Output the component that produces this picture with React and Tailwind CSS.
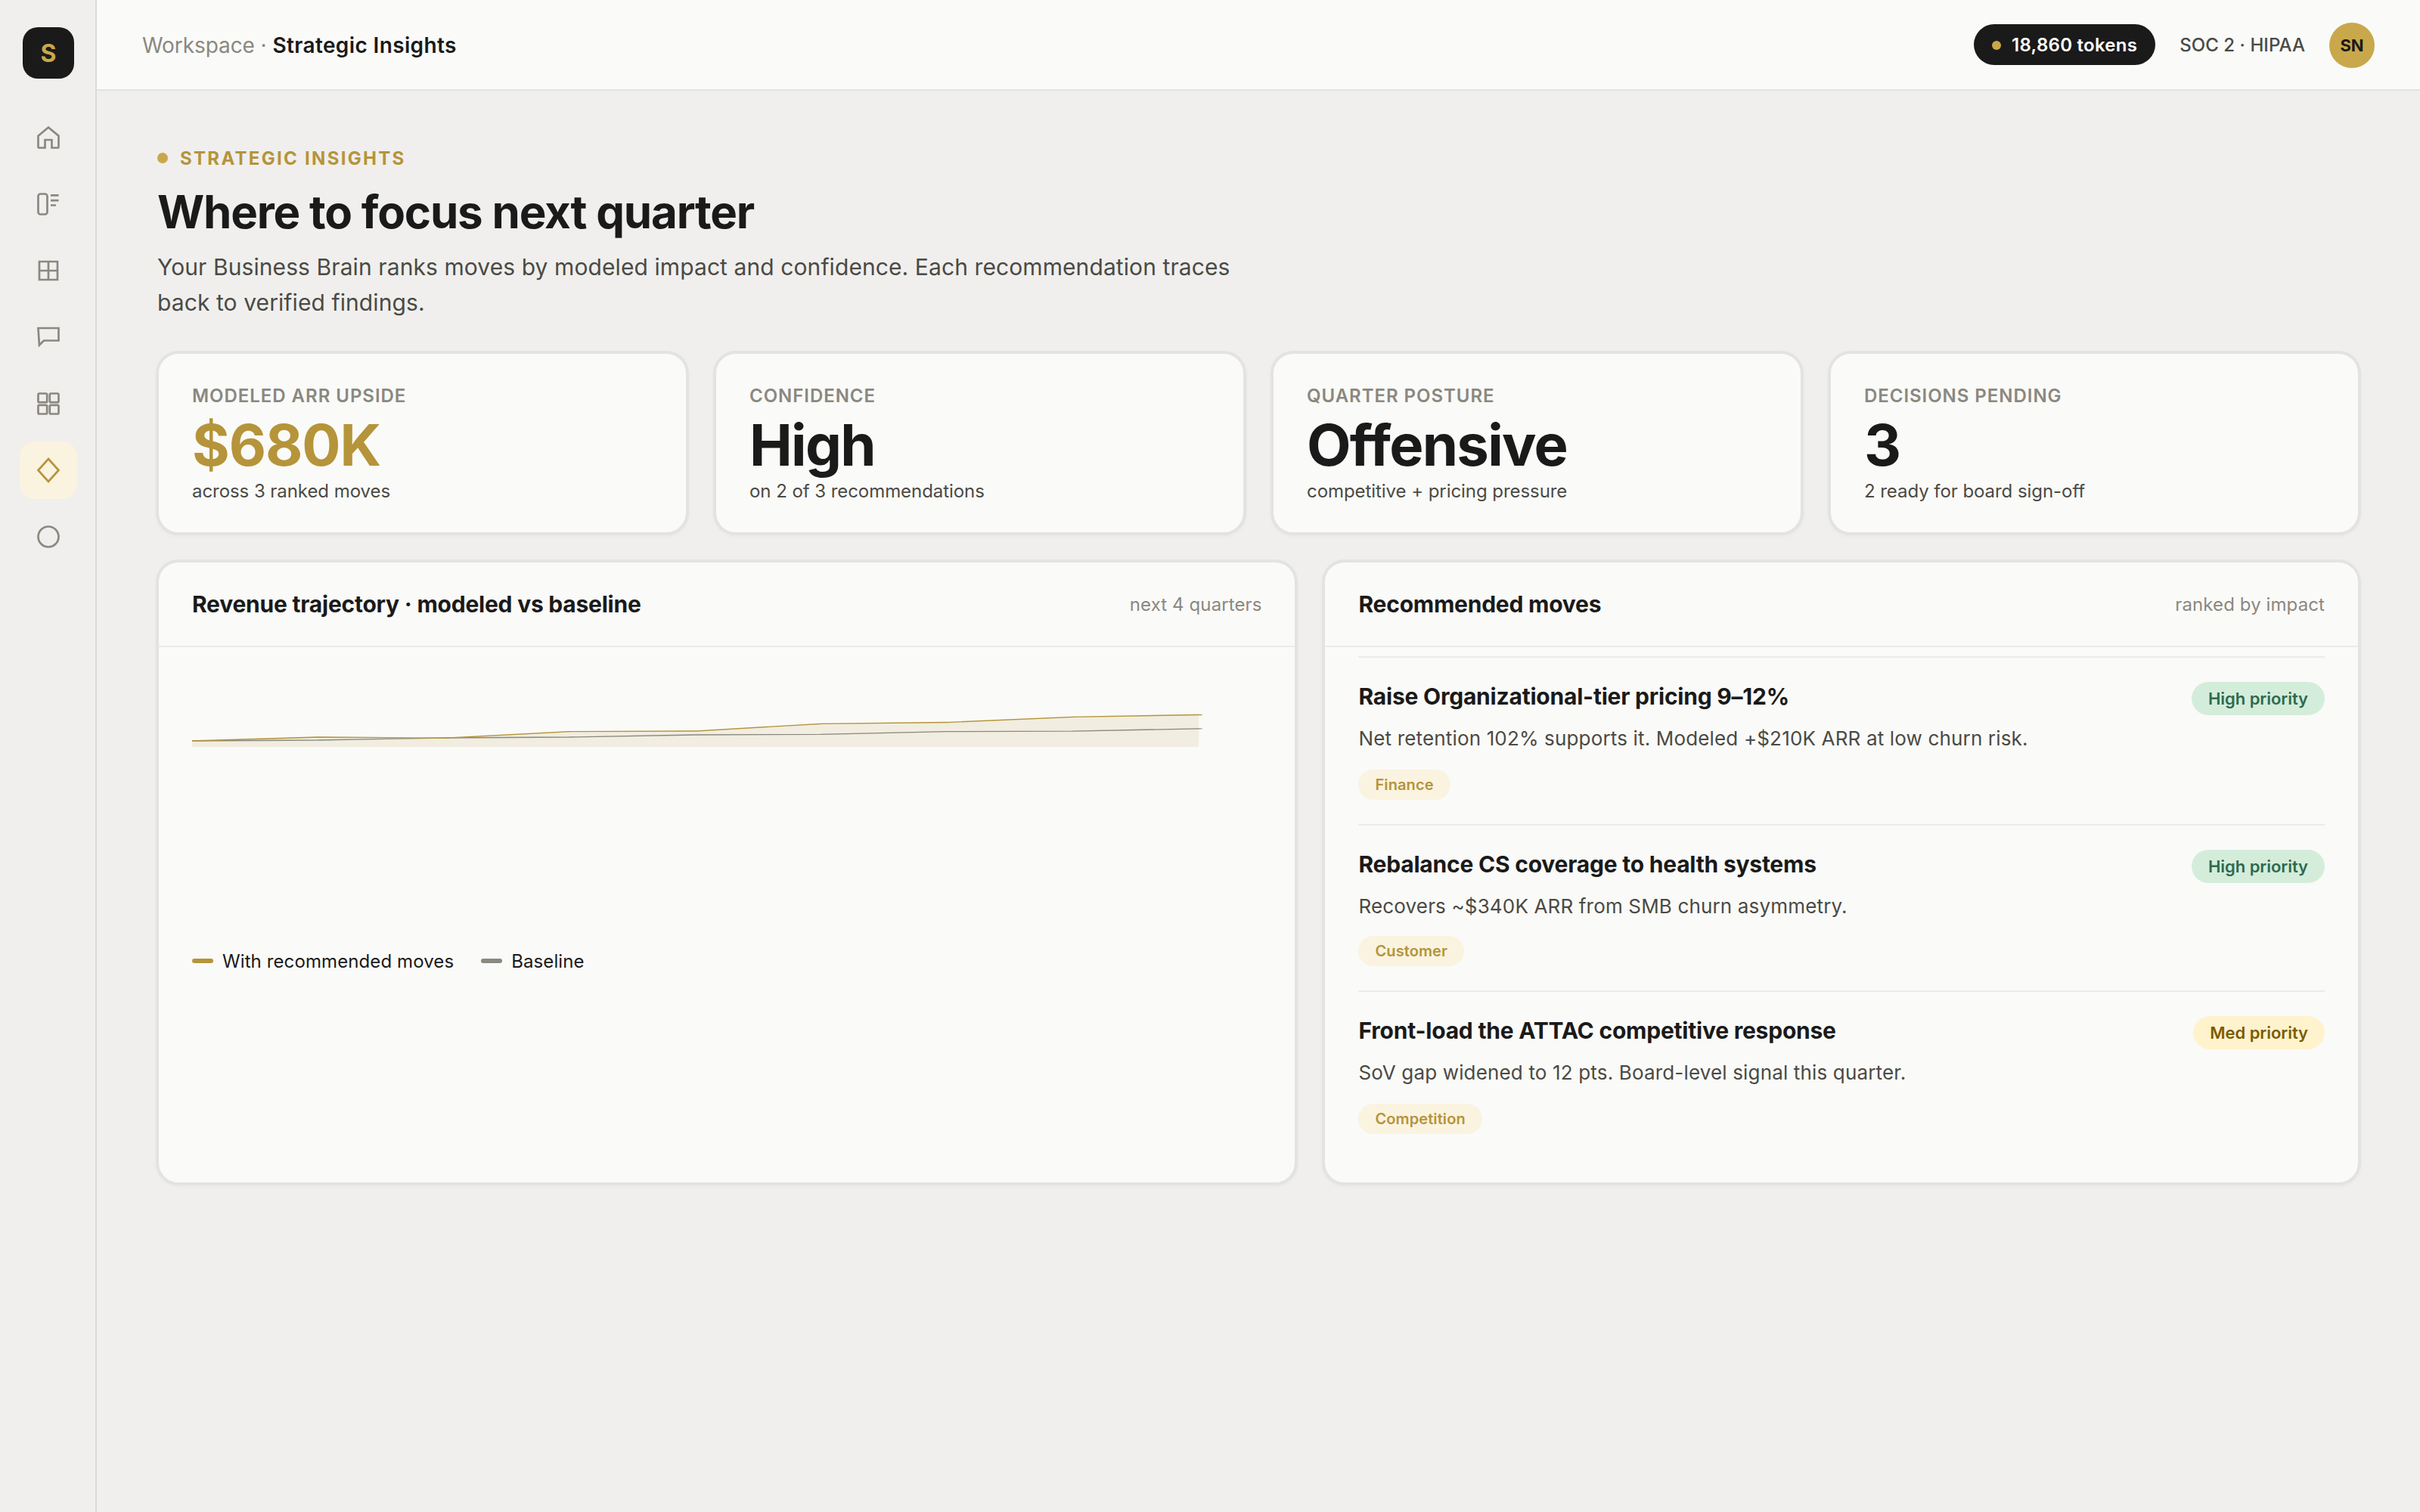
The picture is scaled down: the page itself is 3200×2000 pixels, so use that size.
import React from 'react';
import clsx from 'clsx';

const navItems = [
  {
    id: 'home',
    icon: (
      <path d="M3 10.5 12 3l9 7.5V20a1 1 0 0 1-1 1h-5v-7H9v7H4a1 1 0 0 1-1-1z" />
    ),
  },
  {
    id: 'board',
    icon: (
      <>
        <rect x="3" y="3" width="8" height="18" rx="2" />
        <path d="M14 4.3h7M14 8.7h7M14 13h4.6" />
      </>
    ),
  },
  { id: 'table', icon: <path d="M4 4h16v16H4zM4 12h16M12 4v16" /> },
  { id: 'chat', icon: <path d="M3 4h18v11H8l-4 4z" /> },
  {
    id: 'apps',
    icon: (
      <>
        <rect x="3" y="3" width="7.8" height="7.8" rx="1" />
        <rect x="13.2" y="3" width="7.8" height="7.8" rx="1" />
        <rect x="3" y="13.2" width="7.8" height="7.8" rx="1" />
        <rect x="13.2" y="13.2" width="7.8" height="7.8" rx="1" />
      </>
    ),
  },
  { id: 'insights', icon: <path d="m12 2 9 10-9 10-9-10z" /> },
  { id: 'status', icon: <circle cx="12" cy="12" r="9" /> },
];

const kpis = [
  { label: 'Modeled ARR upside', value: '$680K', note: 'across 3 ranked moves', gold: true },
  { label: 'Confidence', value: 'High', note: 'on 2 of 3 recommendations' },
  { label: 'Quarter posture', value: 'Offensive', note: 'competitive + pricing pressure' },
  { label: 'Decisions pending', value: '3', note: '2 ready for board sign-off' },
];

const moves = [
  {
    title: 'Raise Organizational-tier pricing 9–12%',
    text: 'Net retention 102% supports it. Modeled +$210K ARR at low churn risk.',
    tag: 'Finance',
    priority: 'High',
  },
  {
    title: 'Rebalance CS coverage to health systems',
    text: 'Recovers ~$340K ARR from SMB churn asymmetry.',
    tag: 'Customer',
    priority: 'High',
  },
  {
    title: 'Front-load the ATTAC competitive response',
    text: 'SoV gap widened to 12 pts. Board-level signal this quarter.',
    tag: 'Competition',
    priority: 'Med',
  },
];

const modeled = [50, 45, 46.3, 37.7, 37, 27.3, 25.5, 18.3, 15.5];
const baseline = [50, 49, 46, 45, 42, 41.3, 37.7, 37.2, 33.8];
const STEP = 20.8;

const toPoints = (values) => values.map((y, i) => `${i * STEP},${y}`).join(' ');

const Card = ({ className, children }) => (
  <section
    className={clsx(
      'rounded-[28px] border-2 border-[#e3e3e1] bg-[#fafaf8] shadow-[0_0_0_2px_#e3e3e1,0_2px_6px_rgba(0,0,0,0.06)]',
      className
    )}
  >
    {children}
  </section>
);

const CardHeader = ({ title, note }) => (
  <div className="flex h-[112px] items-center justify-between border-b-2 border-[#ebebe9] px-[44px]">
    <h2 className="text-[30px] font-bold tracking-[-0.23px]">{title}</h2>
    <span className="pt-[2px] text-[24px] tracking-[0.1px] text-[#8a8880]">{note}</span>
  </div>
);

const Sidebar = () => (
  <aside className="flex w-[128px] shrink-0 flex-col items-center border-r-2 border-[#dbdbd9] pt-[36px] pl-[2px]">
    <div className="mb-[40px] flex size-[68px] items-center justify-center rounded-[20px] bg-[#1a1a1a] pt-[2px] text-[32px] font-bold text-[#c9a84c]">
      S
    </div>
    <nav className="flex flex-col gap-[12px]">
      {navItems.map((item) => (
        <a
          key={item.id}
          className={clsx(
            'flex size-[76px] items-center justify-center rounded-[20px]',
            item.id === 'insights' ? 'bg-[#faf3e0] text-[#b5943a]' : 'text-[#8a8880]'
          )}
        >
          <svg viewBox="0 0 24 24" className="size-[36px]" fill="none" stroke="currentColor" strokeWidth="1.8">
            {item.icon}
          </svg>
        </a>
      ))}
    </nav>
  </aside>
);

const TopBar = () => (
  <header className="flex h-[120px] items-center justify-between border-b-2 border-[#e3e3e1] bg-[#fafaf8] px-[60px] pt-[2px]">
    <div className="text-[28px] tracking-[-0.08px] text-[#8a8880]">
      Workspace · <span className="font-semibold tracking-[0.37px] text-[#1a1a1a]">Strategic Insights</span>
    </div>
    <div className="flex items-center gap-[32px] text-[24px]">
      <div className="-mt-[2px] flex h-[54px] items-center gap-[14px] rounded-full bg-[#1a1a1a] px-[24px] pt-[2px] font-semibold tracking-[0.27px] text-white">
        <span className="size-[12px] rounded-full bg-[#c9a84c]" />
        18,860 tokens
      </div>
      <span className="font-medium tracking-[0.05px] text-[#4a4a45]">SOC 2 · HIPAA</span>
      <div className="flex size-[60px] items-center justify-center rounded-full bg-[#c9a84c] text-[22px] font-bold">
        SN
      </div>
    </div>
  </header>
);

const TrajectoryCard = () => (
  <Card>
    <CardHeader title="Revenue trajectory · modeled vs baseline" note="next 4 quarters" />
    <div className="px-[44px] pt-[74px]">
      <svg
        viewBox="0 0 176.75 320"
        preserveAspectRatio="none"
        className="block h-[320px] w-[1414px]"
        fill="none"
        strokeWidth="1.3"
        strokeLinecap="round"
      >
        <polygon points={`0,58 ${toPoints(modeled)} 166.4,58`} fill="#b5943a" fillOpacity="0.12" />
        <polyline points={toPoints(baseline)} stroke="#8a8880" />
        <polyline points={toPoints(modeled)} stroke="#b5943a" />
      </svg>
      <div className="mt-[6px] flex gap-[36px] text-[24px] leading-[30px] tracking-[0.1px]">
        <div className="flex items-center gap-[12px]">
          <span className="h-[6px] w-[28px] rounded-[4px] bg-[#b5943a]" />
          <span className="pt-[2px] leading-[28px]">With recommended moves</span>
        </div>
        <div className="flex items-center gap-[12px]">
          <span className="h-[6px] w-[28px] rounded-[4px] bg-[#8a8880]" />
          <span className="pt-[2px] leading-[28px]">Baseline</span>
        </div>
      </div>
    </div>
  </Card>
);

const MovesCard = () => (
  <Card>
    <CardHeader title="Recommended moves" note="ranked by impact" />
    <div className="px-[44px] pt-[12px]">
      {moves.map((move) => (
        <div
          key={move.title}
          className="group flex h-[220px] items-start justify-between border-t-2 border-[#ebebe9] pt-[32px] first:h-[222px]"
        >
          <div>
            <h3 className="text-[30px] leading-[38px] font-bold tracking-[-0.22px]">{move.title}</h3>
            <p className="mt-[17px] text-[26px] leading-[40px] tracking-[0.16px] text-[#4a4a45]">{move.text}</p>
            <span className="mt-[21px] flex h-[40px] w-fit items-center rounded-full bg-[#faf3e0] px-[22px] text-[20px] font-semibold tracking-[0.1px] text-[#b5943a] group-even:mt-[19px]">
              {move.tag}
            </span>
          </div>
          <span
            className={clsx(
              'flex h-[44px] items-center rounded-full px-[22px] text-[22px] font-semibold tracking-[-0.05px]',
              move.priority === 'High' ? 'bg-[#d4edda] text-[#2d6a4f]' : 'bg-[#fff3cd] text-[#7d5a00]'
            )}
          >
            {move.priority} priority
          </span>
        </div>
      ))}
    </div>
  </Card>
);

const App = () => {
  return (
    <div className="flex h-[2000px] w-[3200px] bg-[#f0efed] font-[Inter,sans-serif] text-[#1a1a1a]">
      <Sidebar />
      <div className="flex-1">
        <TopBar />
        <main className="px-[80px] pt-[74px]">
          <div className="flex items-center gap-[16px] text-[24px] leading-[30px] font-bold tracking-[2.3px] text-[#b5943a] uppercase">
            <span className="size-[14px] rounded-full bg-[#c9a84c]" />
            <span className="pt-[2px] leading-[28px]">Strategic insights</span>
          </div>
          <h1 className="mt-[20px] text-[60px] leading-[72px] font-bold tracking-[-1.2px]">Where to focus next quarter</h1>
          <p className="mt-[14px] w-[1440px] text-[30px] leading-[46.5px] tracking-[0.09px] text-[#4a4a45]">
            Your Business Brain ranks moves by modeled impact and confidence. Each recommendation traces back to
            verified findings.
          </p>

          {/* KPI row */}
          <div className="mt-[43px] grid grid-cols-4 gap-[36px]">
            {kpis.map((kpi) => (
              <Card key={kpi.label} className="h-[240px] px-[44px] pt-[41px]">
                <div className="text-[24px] leading-[30px] font-semibold tracking-[0.96px] text-[#8a8880] uppercase">
                  {kpi.label}
                </div>
                <div
                  className={clsx(
                    'mt-[7px] text-[76px] leading-[84px] font-bold',
                    kpi.gold ? 'tracking-[-1.1px] text-[#b5943a]' : 'tracking-[-1.7px]'
                  )}
                >
                  {kpi.value}
                </div>
                <div className="mt-[5px] text-[24px] leading-[30px] tracking-[-0.06px] text-[#4a4a45]">{kpi.note}</div>
              </Card>
            ))}
          </div>

          <div className="mt-[36px] grid h-[824px] grid-cols-[1.1fr_1fr] gap-[36px]">
            <TrajectoryCard />
            <MovesCard />
          </div>
        </main>
      </div>
    </div>
  );
};

export default App;
